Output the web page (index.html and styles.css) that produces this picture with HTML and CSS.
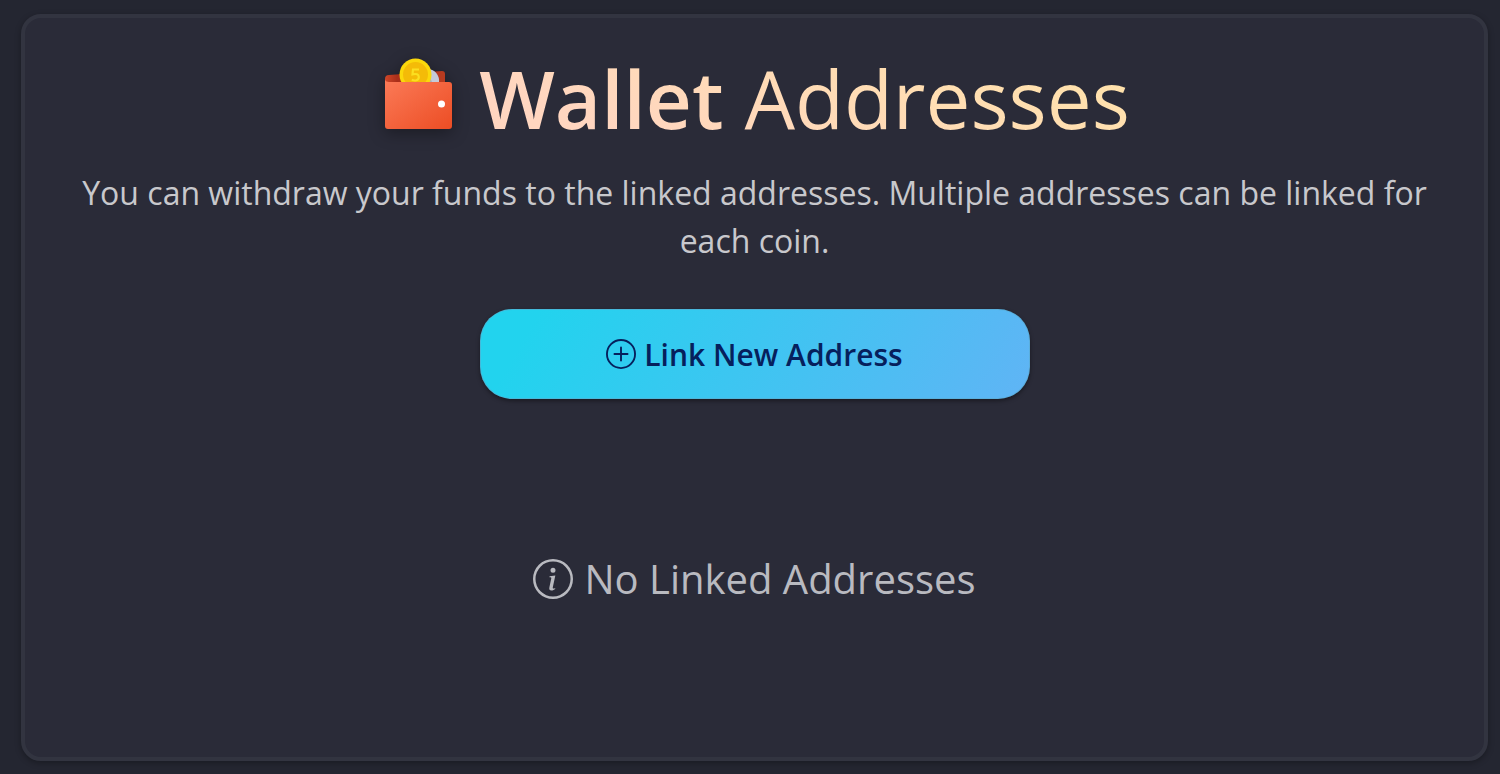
FILE: index.html
```html
<!DOCTYPE html>
<html lang="en">

<head>
  <meta charset="UTF-8">
  <meta name="viewport" content="width=device-width, initial-scale=1.0">
  <title>Wallet Addresses</title>
  <link rel="stylesheet" href="styles.css">
</head>

<body>
  <main class="card">
    <div class="heading">
      <svg class="wallet-icon" viewBox="0 0 80 80" aria-hidden="true">
        <defs>
          <linearGradient id="front" x1="0" y1="0" x2="1" y2="1">
            <stop offset="0" stop-color="#fb7a57"/>
            <stop offset="1" stop-color="#ec4d24"/>
          </linearGradient>
          <linearGradient id="back" x1="0" y1="0" x2="1" y2="0">
            <stop offset="0" stop-color="#cf4628"/>
            <stop offset=".2" stop-color="#a92f1a"/>
            <stop offset="1" stop-color="#b93b20"/>
          </linearGradient>
        </defs>
        <path fill="url(#back)" d="M6 30V25q0-4 4-4L63 17q3 0 3 3v12H6z"/>
        <circle cx="48" cy="27" r="12" fill="#a9afc0"/>
        <path fill="#c5cad8" d="M48 15a12 12 0 0 1 8 21z"/>
        <circle cx="36.500" cy="20.500" r="16" fill="#fbd80c"/>
        <circle cx="36.500" cy="20.500" r="12.500" fill="#f4bb08"/>
        <path fill="none" stroke="#fbdf20" stroke-width="2.200" d="M40 15.500h-6l-.5 4.800q6-1.300 6.300 2.600c0 3.800-4 4.200-7 2.900"/>
        <path fill="url(#front)" d="M6 26q1 2 4 2h60q3 0 3 3v41q0 3-3 3H9q-3 0-3-3z"/>
        <circle cx="62.500" cy="50" r="3.500" fill="#fff"/>
      </svg>
      <h1><b>Wallet</b> Addresses</h1>
    </div>
    <p class="intro">You can withdraw your funds to the linked addresses. Multiple addresses can be linked for each coin.</p>
    <button class="link-button" type="button">
      <svg class="icon" viewBox="0 0 16 16" aria-hidden="true">
        <path d="M8 15A7 7 0 1 1 8 1a7 7 0 0 1 0 14zm0 1A8 8 0 1 0 8 0a8 8 0 0 0 0 16z"/>
        <path d="M8 4a.5.5 0 0 1 .5.5v3h3a.5.5 0 0 1 0 1h-3v3a.5.5 0 0 1-1 0v-3h-3a.5.5 0 0 1 0-1h3v-3A.5.5 0 0 1 8 4z"/>
      </svg>
      Link New Address
    </button>
    <div class="empty">
      <svg class="icon" viewBox="0 0 16 16" aria-hidden="true">
        <path d="M8 15A7 7 0 1 1 8 1a7 7 0 0 1 0 14zm0 1A8 8 0 1 0 8 0a8 8 0 0 0 0 16z"/>
        <path d="m8.930 6.588-2.290.287-.082.380.450.083c.294.070.352.176.288.469l-.738 3.468c-.194.897.105 1.319.808 1.319.545 0 1.178-.252 1.465-.598l.088-.416c-.2.176-.492.246-.686.246-.275 0-.375-.193-.304-.533L8.930 6.588zM9 4.500a1 1 0 1 1-2 0 1 1 0 0 1 2 0z"/>
      </svg>
      No Linked Addresses
    </div>
  </main>
</body>

</html>
```
FILE: styles.css
```css
* {
  box-sizing: border-box;
}

body {
  margin: 0;
  padding: 14px 12px 13px 21px;
  min-height: 100vh;
  display: flex;
  background: #242631;
  font-family: "Open Sans", sans-serif;
}

.card {
  flex: 1;
  display: flex;
  flex-direction: column;
  align-items: center;
  padding: 32px 40px;
  border: 4px solid #323440;
  border-radius: 20px;
  background: #2a2b38;
  box-shadow: 0 2px 6px rgba(0, 0, 0, .3);
}

.heading {
  display: flex;
  align-items: center;
  gap: 20px;
}

.wallet-icon {
  width: 80px;
  height: 80px;
  flex: none;
  margin-bottom: 8px;
  filter: drop-shadow(0 4px 8px rgba(0, 0, 0, .35));
}

h1 {
  margin: 0;
  font-size: 80px;
  line-height: 96px;
  font-weight: 400;
  color: transparent;
  background: linear-gradient(20deg, #ffd6c0 20%, #ffe2ab 90%);
  -webkit-background-clip: text;
  background-clip: text;
}

h1 b {
  font-weight: 600;
}

.intro {
  margin: 23px 0 44px;
  font-size: 32px;
  line-height: 48px;
  text-align: center;
  color: #c8c8cc;
}

.link-button {
  display: flex;
  align-items: center;
  justify-content: center;
  gap: 8px;
  width: 550px;
  max-width: 100%;
  height: 90px;
  border: 1px solid rgba(90, 170, 205, .6);
  border-radius: 32px;
  background: linear-gradient(120deg, #22d3ee 10%, #60b4f5) border-box;
  box-shadow: 0 2px 4px rgba(0, 0, 0, .4);
  color: #06205c;
  font-family: inherit;
  font-size: 30px;
  font-weight: 600;
  cursor: pointer;
}

.icon {
  width: 1em;
  height: 1em;
  flex: none;
  fill: currentColor;
}

.empty {
  display: flex;
  align-items: center;
  gap: 11px;
  margin: 150px 0 116px;
  font-size: 40px;
  line-height: 60px;
  color: #b9bac0;
}
```
